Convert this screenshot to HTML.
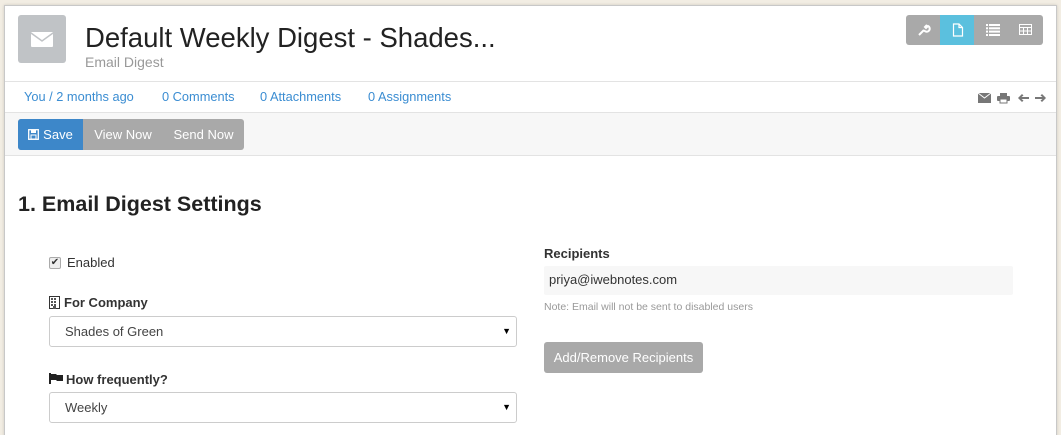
<!DOCTYPE html>
<html style="width:1061px;height:435px;overflow:hidden"><head><meta charset="utf-8"><style>
*{box-sizing:border-box;margin:0;padding:0}
body{width:1061px;height:435px;background:#f2ede3;font-family:"Liberation Sans",sans-serif;overflow:hidden;position:relative;color:#333}
.card{position:absolute;left:4px;top:5px;width:1053px;height:432px;background:#fff;border:1px solid #c8c8c8;border-bottom:none;box-shadow:0 0 3px rgba(0,0,0,.15)}
.abs{position:absolute}
.link{color:#3b8dd2;font-size:13px}
.btn{position:absolute;top:119px;height:31px;line-height:31px;color:#fff;font-size:13px;text-align:center}
.sel{position:absolute;left:49px;width:468px;height:31px;border:1px solid #ccc;border-radius:3px;font-size:13px;line-height:29px;padding-left:15px;color:#444}
.sel:after{content:"▼";position:absolute;right:5px;top:0;font-size:9px;color:#000}
.lbl{position:absolute;font-size:13px;font-weight:bold;color:#333}
</style></head><body>
<div class="card"></div>
<div class="abs" style="left:18px;top:15px;width:48px;height:48px;background:#c0c3c6;border-radius:3px"></div>
<svg class="abs" style="left:30px;top:30px" width="24" height="18" viewBox="0 0 24 18"><rect x="1" y="2" width="22" height="15" rx="1" fill="#fff"/><path d="M1 3 L12 11 L23 3" stroke="#c0c3c6" stroke-width="1.5" fill="none"/></svg>
<div class="abs" style="left:85px;top:22px;font-size:27.5px;color:#222;white-space:nowrap">Default Weekly Digest - Shades...</div>
<div class="abs" style="left:85px;top:54px;font-size:14px;color:#999">Email Digest</div>
<div class="abs" style="left:906px;top:15px;width:137px;height:30px;background:#a9a9a9;border-radius:3px"></div>
<div class="abs" style="left:940px;top:15px;width:34px;height:30px;background:#5bc0de"></div>
<svg class="abs" style="left:917px;top:23px" width="14" height="14" viewBox="0 0 14 14"><path d="M2 12 L7 7 M7 7 a3 3 0 1 0 4-4 L9 5 L8 4 L10 2" stroke="#fff" stroke-width="2" fill="none"/></svg>
<svg class="abs" style="left:952px;top:23px" width="12" height="14" viewBox="0 0 12 14"><path d="M1.5 1 H7 L10.5 4.5 V13 H1.5 Z M7 1 V4.5 H10.5" stroke="#fff" stroke-width="1.2" fill="none"/></svg>
<svg class="abs" style="left:986px;top:24px" width="14" height="12" viewBox="0 0 14 12"><g fill="#fff"><rect x="0" y="0" width="2" height="2"/><rect x="3" y="0" width="11" height="2"/><rect x="0" y="3.3" width="2" height="2"/><rect x="3" y="3.3" width="11" height="2"/><rect x="0" y="6.6" width="2" height="2"/><rect x="3" y="6.6" width="11" height="2"/><rect x="0" y="10" width="2" height="2"/><rect x="3" y="10" width="11" height="2"/></g></svg>
<svg class="abs" style="left:1019px;top:24px" width="13" height="11" viewBox="0 0 13 11"><rect x="0.5" y="0.5" width="12" height="10" fill="none" stroke="#fff"/><path d="M0 3.5H13M0 7H13M4.5 3V11M8.5 3V11" stroke="#fff"/></svg>
<div class="abs" style="left:5px;top:81px;width:1051px;height:1px;background:#e3e3e3"></div>
<div class="abs link" style="left:24px;top:89px;font-size:12.8px">You / 2 months ago</div>
<div class="abs link" style="left:162px;top:89px;font-size:12.8px">0 Comments</div>
<div class="abs link" style="left:260px;top:89px;font-size:12.8px">0 Attachments</div>
<div class="abs link" style="left:368px;top:89px;font-size:12.8px">0 Assignments</div>
<svg class="abs" style="left:977px;top:92px" width="70" height="12" viewBox="0 0 70 12"><g fill="#777"><rect x="1" y="1" width="13" height="10"/><path d="M1 1 L7.5 6 L14 1" stroke="#fff" stroke-width="1" fill="none"/><rect x="23" y="1" width="7" height="3"/><rect x="20" y="4" width="13" height="5" rx="1"/><rect x="23" y="7" width="7" height="4" fill="#fff" stroke="#777"/><path d="M41 6 L45 2 L46.5 3.5 L44.5 5 H52 V7 H44.5 L46.5 8.5 L45 10 Z"/><path d="M69 6 L65 2 L63.5 3.5 L65.5 5 H58 V7 H65.5 L63.5 8.5 L65 10 Z"/></g></svg>
<div class="abs" style="left:5px;top:112px;width:1051px;height:44px;background:#f7f7f7;border-top:1px solid #e3e3e3;border-bottom:1px solid #e3e3e3"></div>
<div class="abs" style="left:18px;top:119px;width:226px;height:31px;background:#a9a9a9;border-radius:3px"></div>
<div class="btn" style="left:18px;width:65px;background:#3d87c9;border-radius:3px 0 0 3px"><svg width="11" height="11" viewBox="0 0 11 11" style="vertical-align:-1px;margin-right:4px"><rect x="0.7" y="0.7" width="9.6" height="9.6" fill="none" stroke="#fff" stroke-width="1.3"/><rect x="3" y="1" width="5" height="3" fill="#fff"/><rect x="3" y="6" width="5" height="4" fill="none" stroke="#fff"/></svg>Save</div>
<div class="btn" style="left:83px;width:80px">View Now</div>
<div class="btn" style="left:163px;width:81px">Send Now</div>
<div class="abs" style="left:18px;top:192px;font-size:21.5px;font-weight:bold;color:#222">1. Email Digest Settings</div>
<div class="abs" style="left:49px;top:257px;width:12px;height:12px;border:1px solid #aaa;border-radius:2px;background:#eee;font-size:10px;line-height:10px;text-align:center;color:#333">✔</div>
<div class="abs" style="left:67px;top:255px;font-size:13px;color:#333">Enabled</div>
<svg class="abs" style="left:49px;top:296px" width="11" height="13" viewBox="0 0 11 13"><rect x="0.5" y="0.5" width="10" height="12" fill="none" stroke="#333"/><g fill="#555"><rect x="2" y="2" width="2" height="2"/><rect x="5" y="2" width="2" height="2"/><rect x="2" y="5" width="2" height="2"/><rect x="5" y="5" width="2" height="2"/><rect x="2" y="8" width="2" height="2"/><rect x="5" y="8" width="2" height="2"/><rect x="4" y="10" width="3" height="3"/></g></svg>
<div class="lbl" style="left:64px;top:295px">For Company</div>
<div class="sel" style="top:316px">Shades of Green</div>
<svg class="abs" style="left:49px;top:373px" width="14" height="11" viewBox="0 0 14 11"><rect x="0" y="0" width="2" height="11" fill="#222"/><path d="M2 1 H7 L8 2 H14 V8 H8 L7 7 H2 Z" fill="#222"/></svg>
<div class="lbl" style="left:66px;top:372px">How frequently?</div>
<div class="sel" style="top:392px">Weekly</div>
<div class="lbl" style="left:544px;top:246px">Recipients</div>
<div class="abs" style="left:544px;top:266px;width:469px;height:29px;background:#f7f7f7;border-radius:2px;font-size:13px;line-height:28px;padding-left:5px;color:#333">priya@iwebnotes.com</div>
<div class="abs" style="left:544px;top:301px;font-size:10.5px;color:#999">Note: Email will not be sent to disabled users</div>
<div class="abs" style="left:544px;top:342px;width:159px;height:31px;background:#a9a9a9;border-radius:3px;color:#fff;font-size:13px;line-height:31px;text-align:center">Add/Remove Recipients</div>
</body></html>
